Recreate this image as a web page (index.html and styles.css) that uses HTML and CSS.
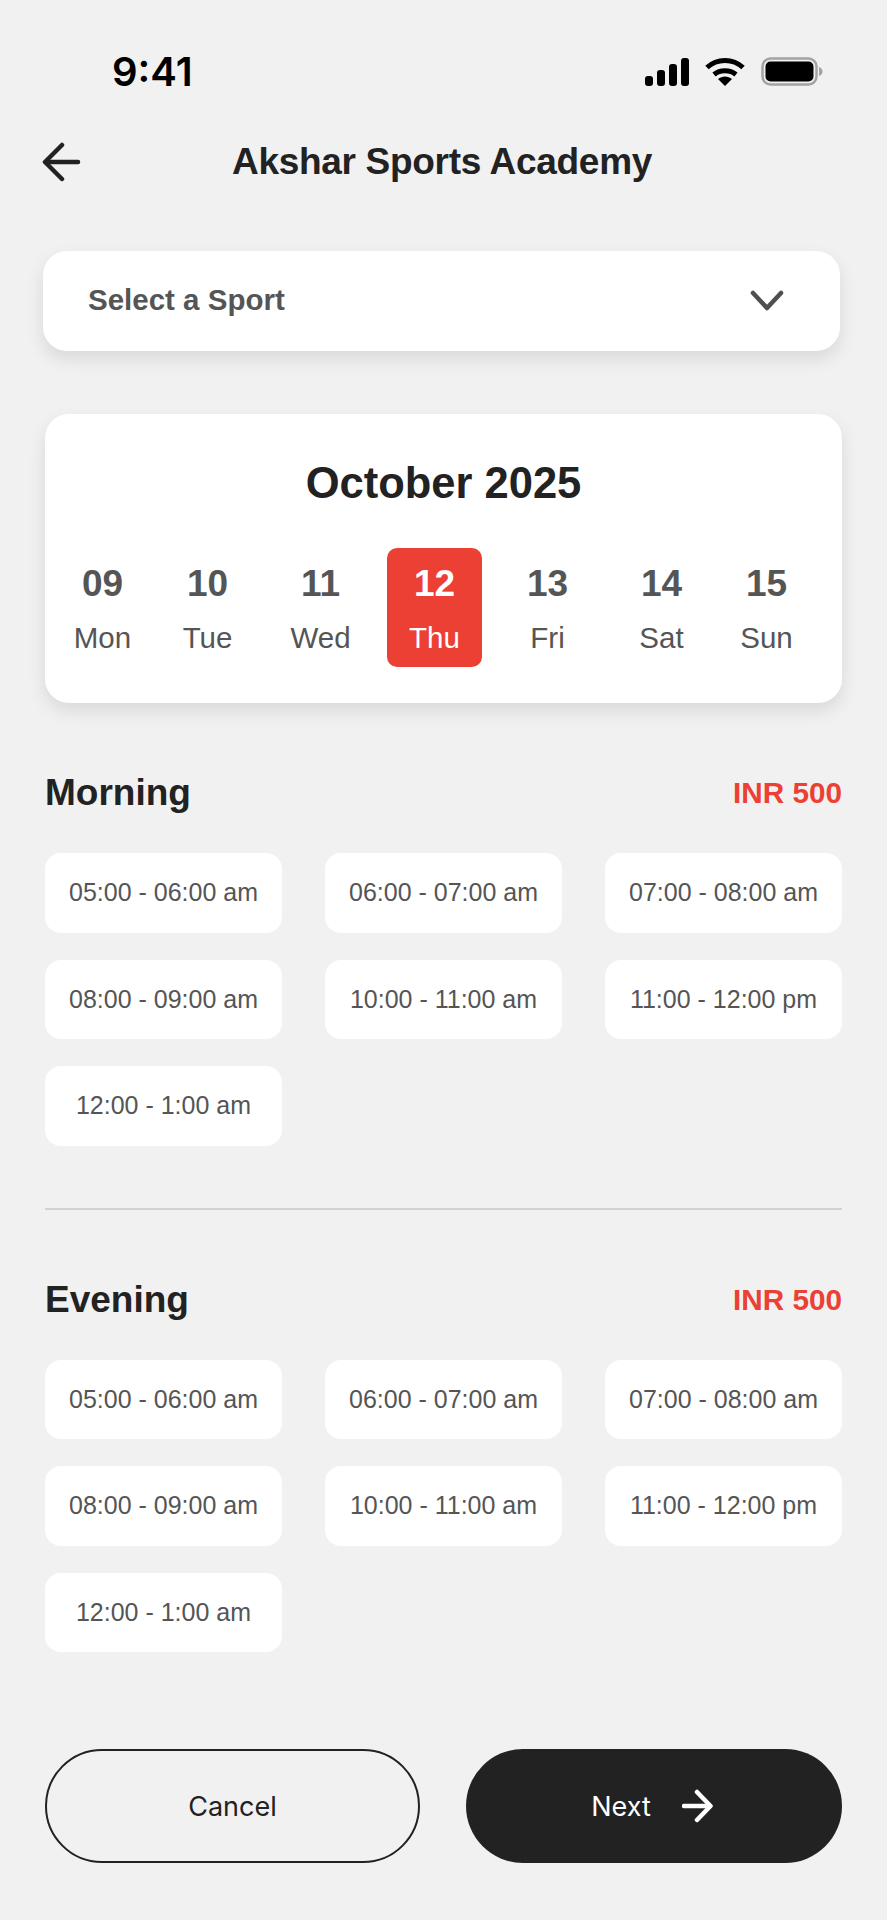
FILE: index.html
```html
<!DOCTYPE html>
<html>
  <head>
    <meta charset="utf-8">
    <title>Akshar Sports Academy</title>
    <link rel="stylesheet" href="styles.css">
  </head>
  <body>

  <div class="status">
    <span class="time">9:41</span>
    <div class="status-icons">
      <svg width="44" height="28" viewBox="0 0 44 28" fill="#000">
        <rect x="0" y="18" width="8" height="10" rx="3"/>
        <rect x="12" y="12" width="8" height="16" rx="3"/>
        <rect x="24" y="6" width="8" height="22" rx="3"/>
        <rect x="36" y="0" width="8" height="28" rx="3"/>
      </svg>
      <svg width="40" height="29" viewBox="0 0 40 29" fill="none" stroke="#000" stroke-width="5">
        <path d="M2 10.5C12 1 28 1 38 10.5"/>
        <path d="M9 17.5C15 12.5 25 12.5 31 17.5"/>
        <path d="M13 22L20 29L27 22C23 18.5 17 18.5 13 22Z" fill="#000" stroke="none"/>
      </svg>
      <svg width="62" height="29" viewBox="0 0 62 29">
        <rect x="1.5" y="1.5" width="54" height="26" rx="8" fill="none" stroke="#a3a3a3" stroke-width="2.5"/>
        <rect x="4.5" y="4.5" width="48" height="20" rx="5" fill="#000"/>
        <path d="M58 10C60.5 11 61.5 12.5 61.5 14.5C61.5 16.5 60.5 18 58 19Z" fill="#a3a3a3"/>
      </svg>
    </div>
  </div>

  <div class="header">
    <svg class="back" width="40" height="40" viewBox="0 0 40 40" fill="none" stroke="#222" stroke-width="4.5" stroke-linecap="round" stroke-linejoin="round">
      <path d="M36 20H4"/>
      <path d="M20 3L3 20L20 37"/>
    </svg>
    <h1>Akshar Sports Academy</h1>
  </div>

  <div class="dropdown">
    <span>Select a Sport</span>
    <svg width="34" height="22" viewBox="0 0 34 22" fill="none" stroke="#4f4f4f" stroke-width="4.5" stroke-linecap="round" stroke-linejoin="round">
      <path d="M3 3L17 18L31 3"/>
    </svg>
  </div>

  <div class="calendar">
    <h2>October 2025</h2>
    <div class="days">
      <div class="day"><b>09</b><span>Mon</span></div>
      <div class="day"><b>10</b><span>Tue</span></div>
      <div class="day"><b>11</b><span>Wed</span></div>
      <div class="day selected"><b>12</b><span>Thu</span></div>
      <div class="day"><b>13</b><span>Fri</span></div>
      <div class="day"><b>14</b><span>Sat</span></div>
      <div class="day"><b>15</b><span>Sun</span></div>
    </div>
  </div>

  <div class="section morning">
    <div class="section-head">
      <h3>Morning</h3>
      <span class="price">INR 500</span>
    </div>
    <div class="slots">
      <div class="slot">05:00 - 06:00 am</div>
      <div class="slot">06:00 - 07:00 am</div>
      <div class="slot">07:00 - 08:00 am</div>
      <div class="slot">08:00 - 09:00 am</div>
      <div class="slot">10:00 - 11:00 am</div>
      <div class="slot">11:00 - 12:00 pm</div>
      <div class="slot">12:00 - 1:00 am</div>
    </div>
  </div>

  <div class="divider"></div>

  <div class="section">
    <div class="section-head">
      <h3>Evening</h3>
      <span class="price">INR 500</span>
    </div>
    <div class="slots">
      <div class="slot">05:00 - 06:00 am</div>
      <div class="slot">06:00 - 07:00 am</div>
      <div class="slot">07:00 - 08:00 am</div>
      <div class="slot">08:00 - 09:00 am</div>
      <div class="slot">10:00 - 11:00 am</div>
      <div class="slot">11:00 - 12:00 pm</div>
      <div class="slot">12:00 - 1:00 am</div>
    </div>
  </div>

  <div class="buttons">
    <div class="btn cancel">Cancel</div>
    <div class="btn next">Next
      <svg width="31" height="34" viewBox="0 0 31 34" fill="none" stroke="#fff" stroke-width="4.5" stroke-linecap="round" stroke-linejoin="round">
        <path d="M2 17H28"/>
        <path d="M15 3L28.5 17L15 31"/>
      </svg>
    </div>
  </div>

  </body>
</html>
```

FILE: styles.css
```css
html, body {
  margin: 0;
  padding: 0;
}

body {
  width: 887px;
  height: 1920px;
  overflow: hidden;
  background-color: #f1f1f1;
  font-family: "Liberation Sans", Arial, sans-serif;
  color: #222;
}

.status {
  display: flex;
  justify-content: space-between;
  align-items: center;
  height: 29px;
  padding: 57px 64px 0 112px;
}

.time {
  font-family: Inter, sans-serif;
  font-weight: 600;
  font-size: 40px;
  color: #000;
}

.status-icons {
  display: flex;
  align-items: center;
  gap: 16px;
}

.header {
  display: flex;
  align-items: center;
  justify-content: center;
  height: 80px;
  margin-top: 36px;
  padding: 0 43px;
  position: relative;
}

.back {
  position: absolute;
  left: 42px;
  top: 20px;
}

h1 {
  margin: 0 3px 0 0;
  font-size: 37px;
  font-weight: bold;
  letter-spacing: -0.3px;
}

.dropdown {
  display: flex;
  justify-content: space-between;
  align-items: center;
  box-sizing: border-box;
  width: 797px;
  height: 100px;
  margin: 49px 0 0 43px;
  padding: 0 56px 0 45px;
  background-color: white;
  border-radius: 24px;
  box-shadow: 0 8px 18px rgba(0, 0, 0, 0.1);
  font-size: 29.5px;
  font-weight: bold;
  color: #555;
}

.dropdown span {
  margin-top: -2px;
}

.calendar {
  box-sizing: border-box;
  width: 797px;
  height: 289px;
  margin: 63px 0 0 45px;
  padding: 44px 0 0 9px;
  background-color: white;
  border-radius: 24px;
  box-shadow: 0 8px 18px rgba(0, 0, 0, 0.1);
}

h2 {
  margin: 0 9px 0 0;
  text-align: center;
  font-size: 43.5px;
  line-height: 50px;
  font-weight: bold;
}

.days {
  display: grid;
  grid-template-columns: 97px 113px 113px 115px 111px 117px 93px;
  justify-items: center;
  margin-top: 40px;
}

.day {
  display: flex;
  flex-direction: column;
  align-items: center;
  box-sizing: border-box;
  width: 95px;
  height: 119px;
  padding-top: 15px;
  color: #555;
  border-radius: 10px;
}

.day b {
  font-size: 37px;
  line-height: 42px;
}

.day span {
  margin-top: 16px;
  font-size: 29.5px;
  line-height: 34px;
}

.day.selected {
  background-color: #ec4034;
  color: white;
}

.section {
  margin: 0 45px;
}

.morning {
  margin-top: 67px;
}

.section-head {
  display: flex;
  justify-content: space-between;
  align-items: center;
  height: 46px;
}

h3 {
  margin: 0;
  font-size: 37px;
  font-weight: bold;
}

.price {
  font-size: 29.7px;
  font-weight: bold;
  color: #ec4034;
}

.slots {
  display: grid;
  grid-template-columns: repeat(3, 237px);
  justify-content: space-between;
  row-gap: 27px;
  margin-top: 37px;
}

.slot {
  display: flex;
  justify-content: center;
  align-items: center;
  height: 79.5px;
  background-color: white;
  border-radius: 16px;
  font-size: 25px;
  color: #555;
}

.divider {
  height: 2px;
  margin: 62px 45px 67px;
  background-color: #d2d2d2;
}

.buttons {
  display: grid;
  grid-template-columns: 375px 376px;
  justify-content: space-between;
  margin: 97px 45px 0;
}

.btn {
  display: flex;
  justify-content: center;
  align-items: center;
  gap: 31px;
  box-sizing: border-box;
  height: 114px;
  border-radius: 57px;
  font-family: Inter, sans-serif;
  font-size: 27px;
}

.cancel {
  border: 2px solid #222;
}

.next {
  padding-right: 4px;
  background-color: #222;
  color: white;
}
```
